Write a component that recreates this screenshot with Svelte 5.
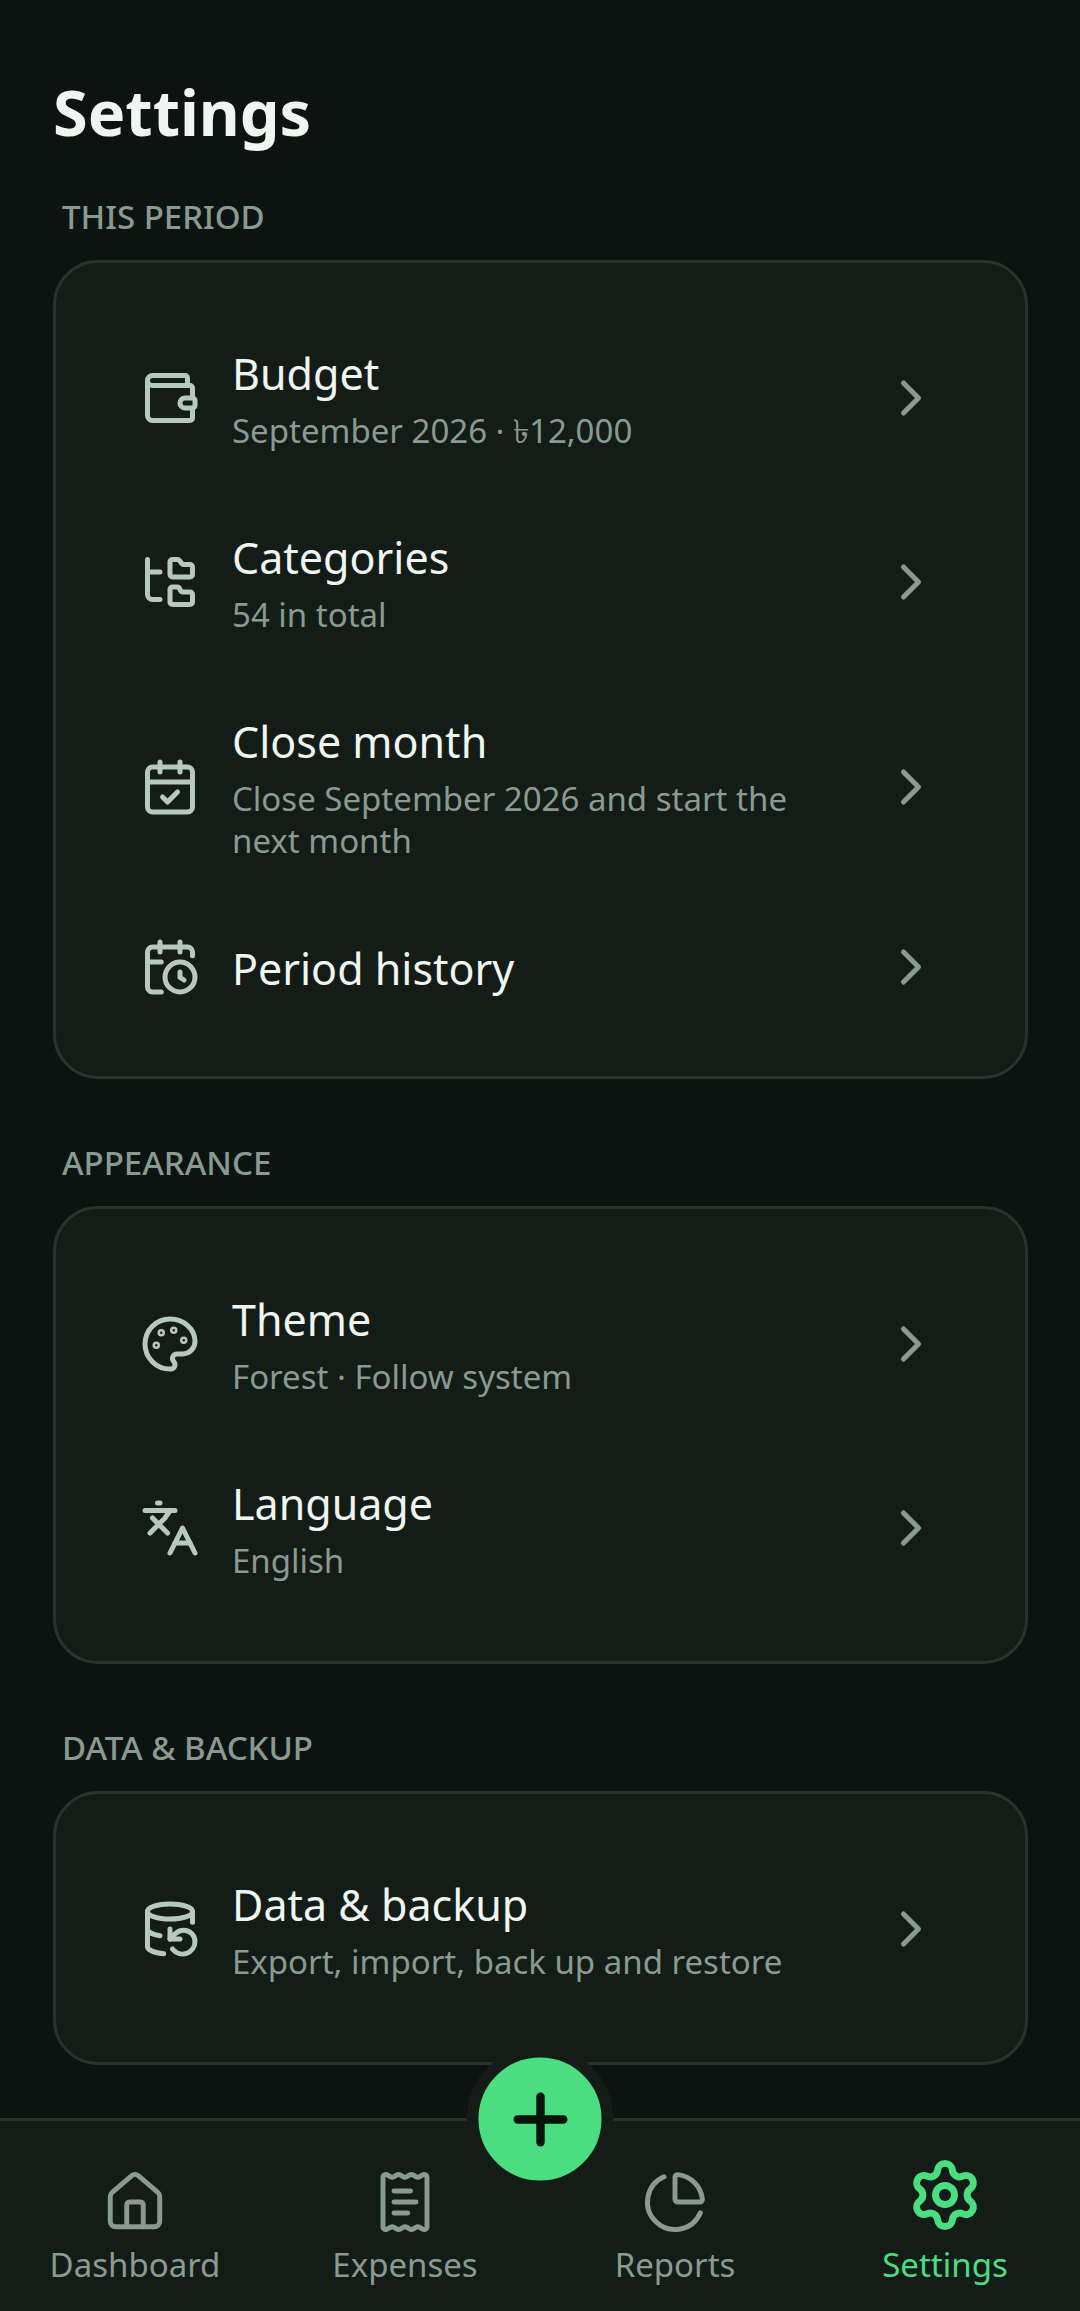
<script>
  const sections = [
    {
      label: 'This period',
      rows: [
        { icon: 'wallet', title: 'Budget', detail: 'September 2026 · ৳12,000' },
        { icon: 'folders', title: 'Categories', detail: '54 in total' },
        {
          icon: 'calendarCheck',
          title: 'Close month',
          detail: 'Close September 2026 and start the next month',
        },
        { icon: 'calendarClock', title: 'Period history' },
      ],
    },
    {
      label: 'Appearance',
      rows: [
        { icon: 'palette', title: 'Theme', detail: 'Forest · Follow system' },
        { icon: 'language', title: 'Language', detail: 'English' },
      ],
    },
    {
      label: 'Data & backup',
      rows: [
        {
          icon: 'database',
          title: 'Data & backup',
          detail: 'Export, import, back up and restore',
        },
      ],
    },
  ];

  const tabs = [
    { icon: 'house', label: 'Dashboard' },
    { icon: 'receipt', label: 'Expenses' },
    { icon: 'pie', label: 'Reports' },
    { icon: 'gear', label: 'Settings' },
  ];

  let active = $state('Settings');

  // stroke paths on a 24x24 grid
  const icons = {
    wallet: [
      'M19 7V4a1 1 0 0 0-1-1H5a2 2 0 0 0 0 4h15a1 1 0 0 1 1 1v4h-3a2 2 0 0 0 0 4h3a1 1 0 0 0 1-1v-2a1 1 0 0 0-1-1',
      'M3 5v14a2 2 0 0 0 2 2h15a1 1 0 0 0 1-1v-4',
    ],
    folders: [
      'M20 10a1 1 0 0 0 1-1V6a1 1 0 0 0-1-1h-2.5a1 1 0 0 1-.8-.4l-.9-1.2A1 1 0 0 0 15 3h-2a1 1 0 0 0-1 1v5a1 1 0 0 0 1 1Z',
      'M20 21a1 1 0 0 0 1-1v-3a1 1 0 0 0-1-1h-2.9a1 1 0 0 1-.88-.55l-.42-.85a1 1 0 0 0-.92-.6H13a1 1 0 0 0-1 1v5a1 1 0 0 0 1 1Z',
      'M3 8h5',
      'M3 3v14a2 2 0 0 0 2 2h3',
    ],
    calendarCheck: [
      'M8 2v4',
      'M16 2v4',
      'M5 4h14a2 2 0 0 1 2 2v14a2 2 0 0 1-2 2H5a2 2 0 0 1-2-2V6a2 2 0 0 1 2-2z',
      'M3 10h18',
      'm9 16 2 2 4-4',
    ],
    calendarClock: [
      'M16 14v2.2l1.6 1',
      'M16 2v4',
      'M8 2v4',
      'M21 7.5V6a2 2 0 0 0-2-2H5a2 2 0 0 0-2 2v14a2 2 0 0 0 2 2h3.5',
      'M3 10h5.5',
      'M22 16a6 6 0 1 1-12 0 6 6 0 1 1 12 0z',
    ],
    palette: [
      'M12 22a1 1 0 0 1 0-20 10 9 0 0 1 10 9 5 5 0 0 1-5 5h-2.25a1.75 1.75 0 0 0-1.4 2.8l.3.4a1.75 1.75 0 0 1-1.4 2.8z',
    ],
    language: ['m5 8 6 6', 'm4 14 6-6 2-3', 'M2 5h12', 'M7 2h1', 'm22 22-5-10-5 10', 'M14 18h6'],
    database: [
      'M21 5a9 3 0 1 1-18 0 9 3 0 1 1 18 0z',
      'M3 12a9 3 0 0 0 5 2.69',
      'M21 9.3V5',
      'M3 5v14a9 3 0 0 0 6.47 2.88',
      'M12 12v4h4',
      'M13 20a5 5 0 0 0 9-3 4.5 4.5 0 0 0-4.5-4.5c-1.33 0-2.54.54-3.41 1.41L12 16',
    ],
    chevron: ['m9 18 6-6-6-6'],
    plus: ['M5 12h14', 'M12 5v14'],
    house: [
      'M15 21v-8a1 1 0 0 0-1-1h-4a1 1 0 0 0-1 1v8',
      'M3 10a2 2 0 0 1 .709-1.528l7-6a2 2 0 0 1 2.582 0l7 6A2 2 0 0 1 21 10v9a2 2 0 0 1-2 2H5a2 2 0 0 1-2-2z',
    ],
    receipt: [
      'M13 16H8',
      'M14 8H8',
      'M16 12H8',
      'M4 3a1 1 0 0 1 1-1 1.3 1.3 0 0 1 .7.2l.933.6a1.3 1.3 0 0 0 1.4 0l.934-.6a1.3 1.3 0 0 1 1.4 0l.933.6a1.3 1.3 0 0 0 1.4 0l.933-.6a1.3 1.3 0 0 1 1.4 0l.934.6a1.3 1.3 0 0 0 1.4 0l.933-.6A1.3 1.3 0 0 1 19 2a1 1 0 0 1 1 1v18a1 1 0 0 1-1 1 1.3 1.3 0 0 1-.7-.2l-.933-.6a1.3 1.3 0 0 0-1.4 0l-.934.6a1.3 1.3 0 0 1-1.4 0l-.933-.6a1.3 1.3 0 0 0-1.4 0l-.933.6a1.3 1.3 0 0 1-1.4 0l-.934-.6a1.3 1.3 0 0 0-1.4 0l-.933.6a1.3 1.3 0 0 1-.7.2 1 1 0 0 1-1-1z',
    ],
    pie: [
      'M21 12c.552 0 1.005-.449.95-.998a10 10 0 0 0-8.953-8.951c-.55-.055-.998.398-.998.95v8a1 1 0 0 0 1 1z',
      'M21.21 15.89A10 10 0 1 1 8 2.83',
    ],
    gear: [
      'M9.671 4.136a2.34 2.34 0 0 1 4.659 0 2.34 2.34 0 0 0 3.319 1.915 2.34 2.34 0 0 1 2.33 4.033 2.34 2.34 0 0 0 0 3.831 2.34 2.34 0 0 1-2.33 4.033 2.34 2.34 0 0 0-3.319 1.915 2.34 2.34 0 0 1-4.659 0 2.34 2.34 0 0 0-3.32-1.915 2.34 2.34 0 0 1-2.33-4.033 2.34 2.34 0 0 0 0-3.831A2.34 2.34 0 0 1 6.35 6.051a2.34 2.34 0 0 0 3.319-1.915',
      'M15 12a3 3 0 1 1-6 0 3 3 0 1 1 6 0z',
    ],
  };

  const paintDots = [
    [13.5, 6.5],
    [17.5, 10.5],
    [6.5, 12.5],
    [8.5, 7.5],
  ];
</script>

{#snippet icon(name)}
  <svg class="icon" viewBox="0 0 24 24" aria-hidden="true">
    {#each icons[name] as d}
      <path {d} />
    {/each}
    {#if name === 'palette'}
      {#each paintDots as [cx, cy]}
        <circle class="dot" {cx} {cy} r="1" />
      {/each}
    {/if}
  </svg>
{/snippet}

<main>
  <h1>Settings</h1>

  {#each sections as section}
    <section>
      <h2>{section.label}</h2>
      <div class="card">
        {#each section.rows as row}
          <button class="row">
            {@render icon(row.icon)}
            <span class="text">
              <span class="title">{row.title}</span>
              {#if row.detail}
                <span class="detail">{row.detail}</span>
              {/if}
            </span>
            <span class="chevron">{@render icon('chevron')}</span>
          </button>
        {/each}
      </div>
    </section>
  {/each}
</main>

<nav>
  {#each tabs as tab}
    <button
      class="tab"
      class:active={active === tab.label}
      aria-current={active === tab.label ? 'page' : undefined}
      onclick={() => (active = tab.label)}
    >
      {@render icon(tab.icon)}
      <span>{tab.label}</span>
    </button>
  {/each}
  <button class="add" aria-label="Add expense">{@render icon('plus')}</button>
</nav>

<style>
  :global(body) {
    background: #0b1411;
    color: #eff5f1;
    font-family: 'Noto Sans', 'Open Sans', sans-serif;
  }

  button {
    margin: 0;
    padding: 0;
    border: 0;
    background: none;
    color: inherit;
    font: inherit;
    cursor: pointer;
  }

  main {
    padding: 70px 52px 250px 53px;
  }

  h1 {
    margin: 0 0 42px;
    font-size: 63px;
    line-height: 84px;
    font-weight: 700;
  }

  section + section {
    margin-top: 63px;
  }

  h2 {
    margin: 0 0 22px;
    padding-left: 9px;
    color: #8a9a91;
    font-size: 33px;
    line-height: 42px;
    font-weight: 500;
    text-transform: uppercase;
  }

  .card {
    padding: 42px 84px;
    border: 3px solid #28332d;
    border-radius: 45px;
    background: #131c17;
  }

  .row {
    display: flex;
    align-items: center;
    gap: 32px;
    width: 100%;
    padding: 38px 0 37px;
    color: #b7c9bf;
    text-align: left;
  }

  .icon {
    display: block;
    flex: none;
    width: 60px;
    height: 60px;
    fill: none;
    stroke: currentColor;
    stroke-width: 2;
    stroke-linecap: round;
    stroke-linejoin: round;
  }

  .dot {
    stroke-width: 1;
  }

  .text {
    display: flex;
    flex: 1;
    flex-direction: column;
    gap: 8px;
    min-width: 0;
    padding-top: 2px;
  }

  .title {
    color: #eff5f1;
    font-size: 43px;
    line-height: 57px;
  }

  .detail {
    color: #8a9a91;
    font-size: 33px;
    line-height: 42px;
  }

  .chevron {
    color: #8a9a91;
  }

  nav {
    position: fixed;
    right: 0;
    bottom: 0;
    left: 0;
    display: grid;
    grid-template-columns: repeat(4, 1fr);
    border-top: 3px solid #26322b;
    background: #131c17;
  }

  .tab {
    display: flex;
    flex-direction: column;
    align-items: center;
    justify-content: flex-end;
    gap: 9px;
    height: 190px;
    padding-bottom: 25px;
    color: #8a9a91;
    font-size: 33px;
    line-height: 42px;
  }

  .tab .icon {
    width: 66px;
    height: 66px;
    stroke-width: 1.8;
  }

  .tab.active {
    gap: 11px;
    color: #4ade80;
  }

  .tab.active .icon {
    width: 76px;
    height: 76px;
    stroke-width: 2.2;
  }

  /* sits across the top edge of the bar */
  .add {
    position: absolute;
    top: -2px;
    left: 50%;
    display: grid;
    place-items: center;
    box-sizing: border-box;
    width: 147px;
    height: 147px;
    border: 12px solid #131c17;
    border-radius: 50%;
    background: #4ade80;
    color: #06140c;
    transform: translate(-50%, -50%);
  }

  .add .icon {
    width: 78px;
    height: 78px;
    stroke-width: 2.6;
  }
</style>
